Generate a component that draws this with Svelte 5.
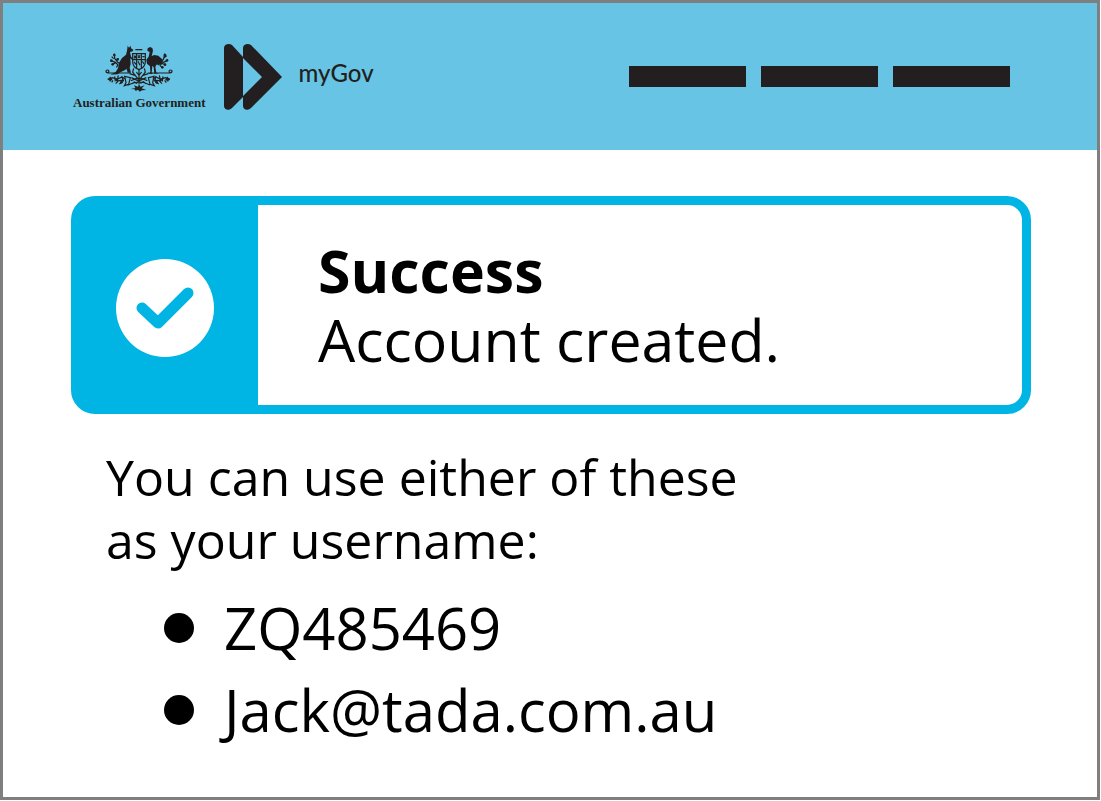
<script>
  const navItems = ['Home', 'Services', 'Account'];
  const usernames = ['ZQ485469', 'Jack@tada.com.au'];
</script>

<div class="page">
  <header class="header">
    <div class="brand">
      <div class="government">
        <svg class="crest" viewBox="120 45 204 144" aria-hidden="true">
          <g fill="#231f20">
            <path d="M188 50l4 6 5-6 1 8 7 4-2 5-8 2 3 14 7 7-2 4-7-6 1 17-3 11 4 15h-10l-3-11-9 5-10 5-8 6-22 1 16-8 7-11 3-17 9-14 12-10 3-12z" />
            <path d="M248 58l7-4 7 3 2 8-4 16 8-3 12 2 11 10 1 11-9 5-9 1-3 7 3 17 8 3h-14l-2-19-4-5-2 22 5 3h-13l4-6-1-17-9-8-2-12 7-9 3-14-7-4z" />
            <path d="M211 60h21v4h-21zM207 169l12 4 3-8 4 8 13-4-9 9 14 5-13 1-7 4-5-6-7 4-3-5-12-1 14-3z" />
          </g>
          <g fill="none" stroke="#231f20" stroke-width="3.6">
            <path d="M203 74h38v24c0 13-9 20-19 24-10-4-19-11-19-24zM203 92h38M215 75v41M229 75v41" />
            <path d="M207 80l7 8m0-8l-7 8M219 79l6 8m0-8l-6 8M232 83h7M207 99l7 8M219 97l6 12M232 97l5 8" />
            <path d="M126 132h70M248 132h70M129 132c-8-1-8-9-1-9 5 0 5 7 0 7M315 132c8-1 8-9 1-9-5 0-5 7 0 7" />
            <path d="M148 74l1 14 9 12 12 7M138 95l13 5 8 8M146 89l-6-6M153 96l7-7M151 102l-9 4M160 107l-6 8M299 74l-3 15-8 13-10 6M307 95l-12 5-10 9M297 86l8-6M293 96l-6-5M292 103l9 4M284 109l8 7" />
            <path d="M222 121v45M220 151l-17-22 3-11M224 151l17-22-3-11M210 139l-16-5M234 139l16-5M214 129l8 10 8-10M199 146l22 10 23-10" />
            <path d="M179 142l17 4-5 20-13 4 5-9zM267 142l-17 4 5 20 13 4-5-9zM190 168q32-18 65 0M198 155q24-14 49 0M202 164l6-5 6 4 7-6 7 5 7-4 8 6" />
            <path d="M128 151l15-5 13 5 15-7 9 5M134 144l6 7-6 6M149 142l2 15M160 139l-4 19M170 141l5 15-12 9M144 154l-4 6M177 154l-16 1-9 9M315 151l-14-5-14 5-14-7-9 5M309 144l-6 7 7 6M294 142l-2 15M283 139l4 19M273 141l-4 15 12 9M299 154l5 7M266 154l16 1 9 9" />
          </g>
          <g fill="#231f20">
            <circle cx="148" cy="78" r="4" /><circle cx="139" cy="95" r="4" />
            <circle cx="158" cy="91" r="4" /><circle cx="143" cy="106" r="4" />
            <circle cx="300" cy="78" r="4" /><circle cx="306" cy="94" r="4" />
            <circle cx="300" cy="107" r="4" /><circle cx="292" cy="115" r="4" />
            <circle cx="134" cy="151" r="4" /><circle cx="155" cy="152" r="4" />
            <circle cx="169" cy="160" r="4" /><circle cx="310" cy="151" r="4" />
            <circle cx="288" cy="152" r="4" /><circle cx="275" cy="160" r="4" />
          </g>
        </svg>
        <span class="government-name">Australian Government</span>
      </div>
      <svg class="mark" viewBox="0 0 58 66" aria-hidden="true">
        <path fill="#231f20" d="M0 4C0 0 5-1 8 1L19 13V53L8 64C5 67 0 66 0 62Z" />
        <path fill="#231f20" fill-rule="evenodd" d="M19 4C19 0 24-1 27 1L58 33 27 64C24 67 19 66 19 62ZM19 14V52L38 33Z" />
      </svg>
      <span class="brand-name">myGov</span>
    </div>
    <nav class="nav" aria-label="Main">
      {#each navItems as item}
        <a href="#{item.toLowerCase()}" aria-label={item}></a>
      {/each}
    </nav>
  </header>

  <main class="content">
    <section class="alert" role="status">
      <div class="alert-icon">
        <svg viewBox="0 0 98 98" aria-hidden="true">
          <circle cx="49" cy="49" r="49" fill="#fff" />
          <path d="M26 49L42 64 72 34" fill="none" stroke="#00b5e3" stroke-width="11" stroke-linecap="round" stroke-linejoin="round" />
        </svg>
      </div>
      <div class="alert-body">
        <h1>Success</h1>
        <p>Account created.</p>
      </div>
    </section>

    <section class="details">
      <p>You can use either of these<br />as your username:</p>
      <ul>
        {#each usernames as username}
          <li>{username}</li>
        {/each}
      </ul>
    </section>
  </main>
</div>

<style>
  :global(body) {
    margin: 0;
    background: #fff;
  }

  .page {
    box-sizing: border-box;
    min-height: calc(100vh - 1px);
    margin: 0 1px 1px 0;
    border: 3px solid #7f7f7f;
    font-family: "Open Sans", "Noto Sans", sans-serif;
    color: #000;
  }

  .header {
    display: flex;
    align-items: center;
    justify-content: space-between;
    box-sizing: border-box;
    height: 147px;
    padding: 0 87px 0 70px;
    background: #67c4e4;
    color: #231f20;
  }

  .brand {
    display: flex;
    align-items: center;
  }

  .government {
    display: flex;
    flex-direction: column;
    align-items: center;
    gap: 3px;
    padding-top: 2px;
  }

  .crest {
    width: 68px;
    height: 48px;
  }

  .government-name {
    font: bold 13px/16px "Liberation Serif", serif;
    white-space: nowrap;
  }

  .mark {
    width: 58px;
    height: 66px;
    margin: 0 17px 0 18px;
  }

  .brand-name {
    padding-bottom: 8px;
    font: 500 24px/28px Lato, sans-serif;
  }

  .nav {
    display: flex;
    gap: 15px;
  }

  .nav a {
    width: 117px;
    height: 21px;
    background: #231f20;
  }

  .content {
    padding: 46px 66px 32px 68px;
  }

  .alert {
    display: flex;
    border: 9px solid #00b5e3;
    border-radius: 24px;
  }

  .alert-icon {
    display: flex;
    align-items: center;
    justify-content: center;
    flex: none;
    box-sizing: border-box;
    width: 178px;
    padding: 6px 9px 0 0;
    background: #00b5e3;
  }

  .alert-icon svg {
    width: 98px;
    height: 98px;
  }

  .alert-body {
    padding: 31px 60px;
    font-size: 59px;
    line-height: 69px;
  }

  h1,
  p {
    margin: 0;
    font-size: inherit;
  }

  .details {
    padding: 32px 35px 0;
    font-size: 50px;
    line-height: 63px;
  }

  ul {
    margin: 15px 0 0;
    padding: 0 0 0 58px;
    list-style: none;
    font-size: 58px;
    line-height: 82px;
  }

  li {
    display: flex;
    align-items: center;
    gap: 30px;
  }

  li::before {
    content: "";
    width: 30px;
    height: 30px;
    border-radius: 50%;
    background: #000;
  }
</style>
